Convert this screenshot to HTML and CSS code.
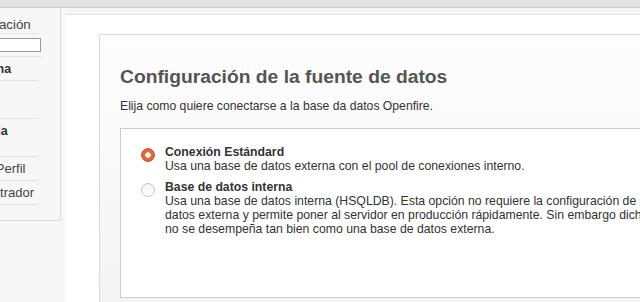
FILE: index.html
```html
<html>
  <head>
    <title>Openfire Setup</title>
    <link rel="stylesheet" href="styles.css">
  </head>
  <body>
  <div class="topbar"></div>
  <div class="layout">
    <div class="sidebar">
      <div class="steps">
        <div class="steps_title">Progreso de Instalación</div>
        <div class="steps_bar"><div class="bar"></div></div>
        <ul class="steps_list">
          <li class="done">Selección de Idioma</li>
          <li>Configuración del<br>Servidor</li>
          <li class="done">Configuración de la<br>Fuente de Datos</li>
          <li>Configuración del Perfil</li>
          <li>Cuenta de Administrador</li>
        </ul>
      </div>
    </div>

    <div class="content">
      <div class="panel">
        <h1>Configuración de la fuente de datos</h1>
        <p class="intro">Elija como quiere conectarse a la base da datos Openfire.</p>

        <div class="options">
          <div class="option">
            <span class="radio checked"></span>
            <div class="option_text">
              <b>Conexión Estándard</b><br>
              Usa una base de datos externa con el pool de conexiones interno.
            </div>
          </div>
          <div class="option">
            <span class="radio"></span>
            <div class="option_text">
              <b>Base de datos interna</b><br>
              Usa una base de datos interna (HSQLDB). Esta opción no requiere la configuración de una base de<br>
              datos externa y permite poner al servidor en producción rápidamente. Sin embargo dicha base de datos<br>
              no se desempeña tan bien como una base de datos externa.
            </div>
          </div>
        </div>
      </div>
    </div>
  </div>
  </body>
</html>
```

FILE: styles.css
```css
body{
    margin: 0;
    overflow: hidden;
    background-color: #ffffff;
    font-family: "Liberation Sans", Arial, sans-serif;
    color: #333333;
}
.topbar{
    height: 7px;
    background-color: #e2e2e2;
    border-bottom: 1px solid #cecece;
}
.layout{
    display: flex;
    align-items: flex-start;
    background-color: #f6f6f6;
}
.sidebar{
    flex: none;
    width: 170px;
    margin-left: -109px;
    padding: 0 4px 11px 0;
    background-color: #f7f7f7;
}
.steps{
    border-right: 1px solid #dddddd;
    border-bottom: 1px solid #dddddd;
    padding: 0 22px 15px 0;
    font-size: 13px;
    line-height: 14px;
    color: #444444;
}
.steps_title{
    padding: 10px 0 1px 0;
    border-bottom: 1px solid #e4e4e4;
    white-space: nowrap;
    font-size: 13.3px;
}
.steps_bar{
    padding: 4px 0;
    margin-right: -3px;
    border-bottom: 1px solid #e4e4e4;
}
.bar{
    height: 12px;
    border: 1px solid #999999;
    background-color: #ffffff;
}
.steps_list{
    list-style: none;
    margin: 0;
    padding: 0;
}
.steps_list li{
    padding: 5px 0 4px 0;
    border-bottom: 1px solid #e4e4e4;
    white-space: nowrap;
}
.steps_list li.done{
    font-size: 12.5px;
    font-weight: bold;
    color: #333333;
}
.content{
    flex: 1;
    margin-top: 6px;
    padding: 19px 0 0 34px;
    border-top: 1px solid #e4e4e4;
    background-color: #ffffff;
}
.panel{
    width: 700px;
    height: 300px;
    padding: 31px 0 0 20px;
    border-top: 1px solid #dadada;
    border-left: 1px solid #dadada;
    background: linear-gradient(#fdfdfd, #f2f2f2);
}
h1{
    margin: 0;
    font-size: 19.25px;
    line-height: 22px;
    color: #555555;
}
.intro{
    margin: 11px 0 0 0;
    font-size: 12.2px;
    line-height: 14px;
}
.options{
    margin-top: 15px;
    height: 152px;
    padding: 16px 0 0 20px;
    border: 1px solid #cccccc;
    border-right: none;
    background-color: #ffffff;
}
.option{
    display: flex;
    align-items: flex-start;
    margin-bottom: 7px;
}
.option_text{
    font-size: 12.25px;
    line-height: 14px;
    white-space: nowrap;
}
.option_text b{
    color: #333333;
}
.radio{
    flex: none;
    box-sizing: border-box;
    width: 14px;
    height: 14px;
    margin: 3px 10px 0 0;
    border-radius: 50%;
    border: 1px solid #c4c4c4;
    background: linear-gradient(#f2f2f2, #ffffff);
}
.radio.checked{
    border-color: #c9572e;
    background: radial-gradient(circle, #ffffff 0 2.5px, #e66c3e 3px, #d95f31);
}
```
